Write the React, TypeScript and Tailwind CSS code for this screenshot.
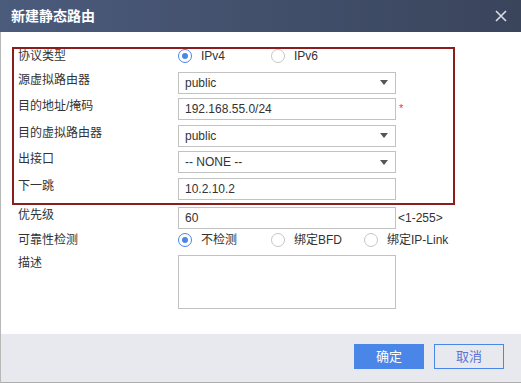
const Radio = ({ checked, label }: { checked?: boolean; label: string }) => (
  <div className="w-[93px] flex items-center shrink-0">
    <span
      className={`w-[14px] h-[14px] rounded-full border flex items-center justify-center bg-white ${
        checked ? "border-[#4a86e8]" : "border-[#c6c6c6]"
      }`}
    >
      {checked && <span className="w-[6px] h-[6px] rounded-full bg-[#4a86e8]" />}
    </span>
    <span className="ml-[9px] text-[12px] leading-[16px] text-[#333]">{label}</span>
  </div>
);

const Select = ({ value }: { value: string }) => (
  <div className="w-[218px] h-[22px] border border-[#c2c2c2] bg-white flex items-center justify-between pl-[6px] pr-[7px] text-[12px] text-[#333]">
    <span>{value}</span>
    <svg width="8" height="5" viewBox="0 0 8 5">
      <polygon points="0,0 8,0 4,5" fill="#555" />
    </svg>
  </div>
);

const TextInput = ({ value }: { value: string }) => (
  <div className="w-[218px] h-[22px] border border-[#c2c2c2] bg-white flex items-center pl-[6px] text-[12px] text-[#333]">
    {value}
  </div>
);

const Label = ({ text }: { text: string }) => (
  <div className="w-[160px] shrink-0 text-[12px] leading-[16px] text-[#333]">{text}</div>
);

export default function App() {
  return (
    <div className="w-[521px] h-[383px] flex flex-col bg-white font-['Liberation_Sans','Noto_Sans_CJK_SC',sans-serif]">
      <div className="h-[32px] flex items-center justify-between pl-[11px] pr-[14px] bg-gradient-to-r from-[#4b5b7c] to-[#3a455c]">
        <span className="text-white text-[14px] font-bold">新建静态路由</span>
        <svg width="12" height="12" viewBox="0 0 12 12">
          <path d="M1 1 L11 11 M11 1 L1 11" stroke="#d9dde5" strokeWidth="1.6" />
        </svg>
      </div>

      <div className="flex-1 flex flex-col border-l border-[#b8b8b8]">
        <div className="flex-1 pt-[15px] pl-[11px]">
          <div className="w-[443px] border-2 border-[#8b1d1d] pl-[4px] pb-[3px] flex flex-col">
            <div className="h-[14px] flex items-center">
              <Label text="协议类型" />
              <Radio checked label="IPv4" />
              <Radio label="IPv6" />
            </div>
            <div className="mt-[8.7px] flex flex-col gap-[4.6px]">
              <div className="flex items-start">
                <Label text="源虚拟路由器" />
                <Select value="public" />
              </div>
              <div className="flex items-start">
                <Label text="目的地址/掩码" />
                <TextInput value="192.168.55.0/24" />
                <span className="ml-[3px] mt-[4px] text-[11px] leading-[12px] text-[#e8336a]">*</span>
              </div>
              <div className="flex items-start">
                <Label text="目的虚拟路由器" />
                <Select value="public" />
              </div>
              <div className="flex items-start">
                <Label text="出接口" />
                <Select value="-- NONE --" />
              </div>
              <div className="flex items-start">
                <Label text="下一跳" />
                <TextInput value="10.2.10.2" />
              </div>
            </div>
          </div>

          <div className="pl-[6px] flex flex-col">
            <div className="mt-[2px] flex items-start">
              <Label text="优先级" />
              <TextInput value="60" />
              <span className="ml-[2px] self-center text-[12px] text-[#333]">&lt;1-255&gt;</span>
            </div>
            <div className="h-[22px] flex items-center">
              <Label text="可靠性检测" />
              <Radio checked label="不检测" />
              <Radio label="绑定BFD" />
              <Radio label="绑定IP-Link" />
            </div>
            <div className="mt-[4px] flex items-start">
              <Label text="描述" />
              <div className="w-[218px] h-[54px] border border-[#c2c2c2] bg-white" />
            </div>
          </div>
        </div>

        <div className="h-[49px] bg-[#e8e9ee] border-b border-[#adadad] flex items-start justify-end pt-[10px] pr-[17px] gap-[10px]">
          <button className="w-[70px] h-[25px] bg-[#4a86e8] text-white text-[13px] flex items-center justify-center">
            确定
          </button>
          <button className="w-[70px] h-[25px] border border-[#4a86e8] text-[#5a74d6] text-[13px] flex items-center justify-center">
            取消
          </button>
        </div>
      </div>
    </div>
  );
}
